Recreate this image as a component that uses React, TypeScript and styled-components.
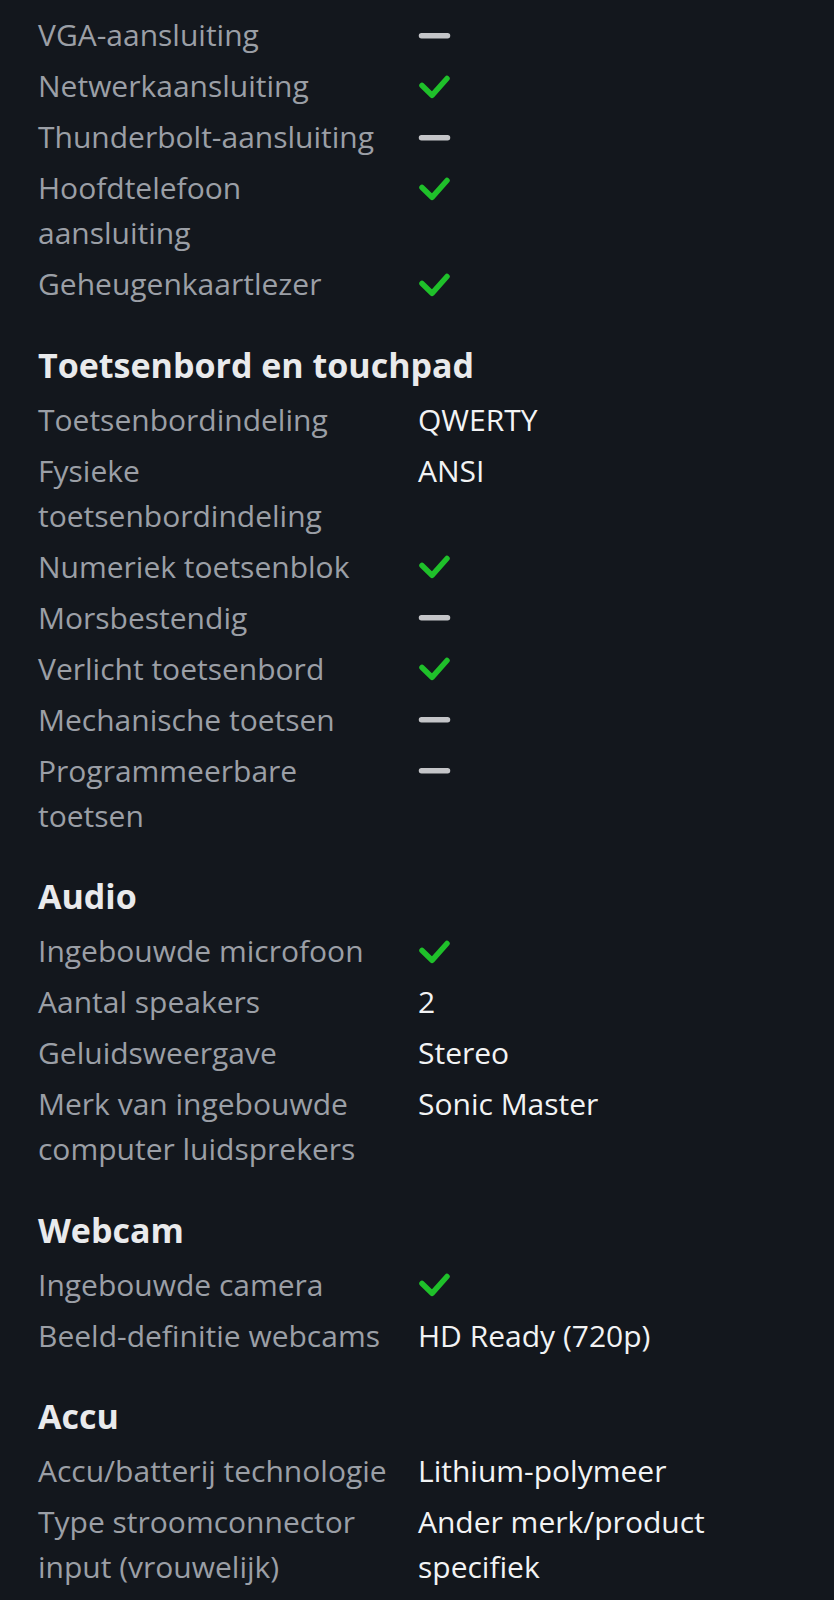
import React from 'react';
import styled, {createGlobalStyle} from 'styled-components';

const GlobalStyle = createGlobalStyle`
  html, body {
    margin: 0;
    padding: 0;
    background: #13171d;
  }
`;

const Page = styled.div`
  box-sizing: border-box;
  width: 834px;
  min-height: 1600px;
  padding: 12px 38px 0 38px;
  background: #13171d;
  font-family: "Open Sans", "Noto Sans", sans-serif;
  font-size: 30px;
  line-height: 45px;
`;

const Section = styled.section`
  display: flex;
  flex-direction: column;
  gap: 6px;

  & + & {
    margin-top: 38.5px;
  }
`;

const SectionTitle = styled.h2`
  margin: 0 0 6px 0;
  font-size: 34px;
  line-height: 40px;
  font-weight: 700;
  color: #e9eaec;
`;

const SpecRow = styled.div`
  display: grid;
  grid-template-columns: 356px 1fr;
  column-gap: 24px;
`;

const Label = styled.div`
  color: #9b9fa6;
`;

const Value = styled.div`
  color: #f2f3f4;
  display: flex;
  align-items: flex-start;
`;

const IconBox = styled.span`
  display: flex;
  align-items: center;
  height: 45px;
`;

const Check = () => (
    <IconBox>
        <svg width="36" height="28" viewBox="0 0 36 28">
            <polyline points="4,13.5 14,23.3 29,6.5" fill="none" stroke="#1fc02a" strokeWidth="5.5"
                      strokeLinecap="round" strokeLinejoin="round"/>
        </svg>
    </IconBox>
);

const Dash = () => (
    <IconBox>
        <svg width="36" height="28" viewBox="0 0 36 28">
            <line x1="3.5" y1="14.7" x2="29.5" y2="14.7" stroke="#c4c5c8" strokeWidth="5.5" strokeLinecap="round"/>
        </svg>
    </IconBox>
);

type Spec = [string, string | boolean];

interface SpecGroup {
    title?: string;
    items: Spec[];
}

const groups: SpecGroup[] = [
    {
        items: [
            ['VGA-aansluiting', false],
            ['Netwerkaansluiting', true],
            ['Thunderbolt-aansluiting', false],
            ['Hoofdtelefoon aansluiting', true],
            ['Geheugenkaartlezer', true],
        ],
    },
    {
        title: 'Toetsenbord en touchpad',
        items: [
            ['Toetsenbordindeling', 'QWERTY'],
            ['Fysieke toetsenbordindeling', 'ANSI'],
            ['Numeriek toetsenblok', true],
            ['Morsbestendig', false],
            ['Verlicht toetsenbord', true],
            ['Mechanische toetsen', false],
            ['Programmeerbare toetsen', false],
        ],
    },
    {
        title: 'Audio',
        items: [
            ['Ingebouwde microfoon', true],
            ['Aantal speakers', '2'],
            ['Geluidsweergave', 'Stereo'],
            ['Merk van ingebouwde computer luidsprekers', 'Sonic Master'],
        ],
    },
    {
        title: 'Webcam',
        items: [
            ['Ingebouwde camera', true],
            ['Beeld-definitie webcams', 'HD Ready (720p)'],
        ],
    },
    {
        title: 'Accu',
        items: [
            ['Accu/batterij technologie', 'Lithium-polymeer'],
            ['Type stroomconnector input (vrouwelijk)', 'Ander merk/product specifiek'],
        ],
    },
];

const renderValue = (value: string | boolean) => {
    if (value === true) return <Check/>;
    if (value === false) return <Dash/>;
    return value;
};

const App = () => {
    return (
        <>
            <GlobalStyle/>
            <Page>
                {groups.map((group, i) => (
                    <Section key={i}>
                        {group.title && <SectionTitle>{group.title}</SectionTitle>}
                        {group.items.map(([label, value]) => (
                            <SpecRow key={label}>
                                <Label>{label}</Label>
                                <Value>{renderValue(value)}</Value>
                            </SpecRow>
                        ))}
                    </Section>
                ))}
            </Page>
        </>
    );
};

export default App;
